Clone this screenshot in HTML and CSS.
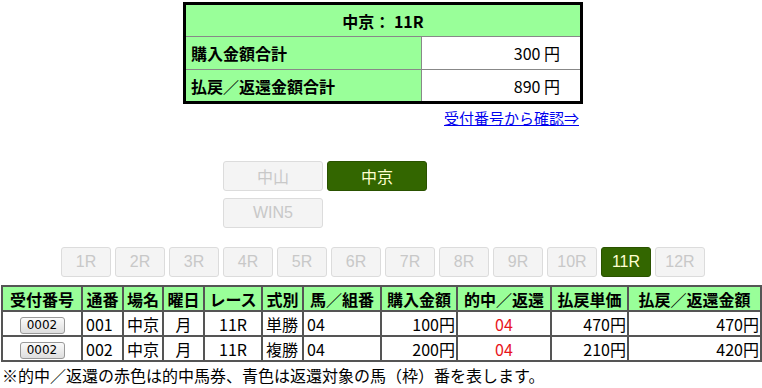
FILE: index.html
```html
<!DOCTYPE html>
<html lang="ja">
<head>
<meta charset="utf-8">
<link rel="stylesheet" href="styles.css">
</head>
<body>
<div class="summary">
  <table class="sum-table">
    <tr><th colspan="2" class="sum-head">中京： 11R</th></tr>
    <tr><th class="sum-label">購入金額合計</th><td class="sum-val">300 円</td></tr>
    <tr><th class="sum-label">払戻／返還金額合計</th><td class="sum-val">890 円</td></tr>
  </table>
  <div class="link-row"><a href="#" class="confirm-link">受付番号から確認⇒</a></div>
</div>

<div class="venues">
  <span class="btn">中山</span>
  <span class="btn active">中京</span>
  <span class="btn win5">WIN5</span>
</div>

<div class="races">
  <span class="btn race">1R</span>
  <span class="btn race">2R</span>
  <span class="btn race">3R</span>
  <span class="btn race">4R</span>
  <span class="btn race">5R</span>
  <span class="btn race">6R</span>
  <span class="btn race">7R</span>
  <span class="btn race">8R</span>
  <span class="btn race">9R</span>
  <span class="btn race">10R</span>
  <span class="btn race active">11R</span>
  <span class="btn race">12R</span>
</div>

<table class="detail">
  <colgroup>
    <col class="c1"><col class="c2"><col class="c3"><col class="c4"><col class="c5"><col class="c6">
    <col class="c7"><col class="c8"><col class="c9"><col class="c10"><col class="c11">
  </colgroup>
  <tr>
    <th>受付番号</th><th>通番</th><th>場名</th><th>曜日</th><th>レース</th><th>式別</th>
    <th>馬／組番</th><th>購入金額</th><th>的中／返還</th><th>払戻単価</th><th>払戻／返還金額</th>
  </tr>
  <tr>
    <td class="center"><span class="rbtn">0002</span></td><td>001</td><td>中京</td><td class="center">月</td>
    <td class="center">11R</td><td>単勝</td><td>04</td><td class="right">100円</td>
    <td class="center hit">04</td><td class="right">470円</td><td class="right">470円</td>
  </tr>
  <tr>
    <td class="center"><span class="rbtn">0002</span></td><td>002</td><td>中京</td><td class="center">月</td>
    <td class="center">11R</td><td>複勝</td><td>04</td><td class="right">200円</td>
    <td class="center hit">04</td><td class="right">210円</td><td class="right">420円</td>
  </tr>
</table>
<p class="note">※的中／返還の赤色は的中馬券、青色は返還対象の馬（枠）番を表します。</p>
</body>
</html>
```

FILE: styles.css
```css
html, body {
  margin: 0;
  padding: 0;
  background: #fff;
}
body {
  font-family: "Noto Sans CJK JP", "DejaVu Sans", sans-serif;
  color: #000;
}
.summary {
  width: 400px;
  margin: 2px 0 0 183px;
}
.sum-table {
  width: 400px;
  border-collapse: collapse;
  border: 3px solid #000;
  font-size: 16px;
  line-height: 20px;
}
.sum-table th, .sum-table td {
  border: 1px solid #888;
  height: 33px;
  padding: 0 5px;
  box-sizing: border-box;
}
.sum-head {
  background: #99ff99;
  text-align: center;
  font-weight: bold;
}
.sum-label {
  background: #99ff99;
  text-align: left;
  font-weight: bold;
  width: 237px;
}
.sum-val {
  background: #fff;
  text-align: right;
  padding-right: 20px !important;
}
.link-row {
  text-align: right;
  padding-right: 4px;
  margin-top: 3px;
  line-height: 20px;
}
.confirm-link {
  color: #0000ee;
  font-size: 15px;
  text-decoration: underline;
}
.venues {
  width: 316px;
  margin: 33px auto 0;
  display: grid;
  grid-template-columns: repeat(3, 100px);
  column-gap: 4px;
  row-gap: 7px;
}
.win5 {
  grid-column: 1;
}
.btn {
  display: flex;
  align-items: center;
  justify-content: center;
  height: 30px;
  box-sizing: border-box;
  border: 1px solid #dcdcdc;
  border-radius: 3px;
  background: #f4f4f4;
  color: #c8c8c8;
  font-family: "Liberation Sans", "Noto Sans CJK JP", sans-serif;
  font-size: 16px;
}
.btn.active {
  background: #336600;
  border-color: #2a5200;
  color: #ffffd0;
}
.races {
  display: flex;
  justify-content: center;
  gap: 4px;
  margin: 19px 0 0 4px;
}
.race {
  width: 50px;
  height: 30px;
}
.detail {
  margin: 8px 0 0 1px;
  width: 759px;
  border-collapse: collapse;
  border: 2px solid #444;
  table-layout: fixed;
  font-size: 16px;
  line-height: 20px;
}
.detail th, .detail td {
  border: 2px solid #555;
  padding: 0 3px;
  height: 25px;
  box-sizing: border-box;
  white-space: nowrap;
  overflow: hidden;
}
.detail th {
  background: #99ff99;
  font-weight: bold;
  text-align: center;
}
.detail td { text-align: left; }
.detail td.center { text-align: center; }
.detail td.right { text-align: right; padding-right: 1px; }
.detail td.hit { color: #e8141c; }
.c1 { width: 80px; }
.c2 { width: 41px; }
.c3 { width: 40px; }
.c4 { width: 41px; }
.c5 { width: 58px; }
.c6 { width: 41px; }
.c7 { width: 78px; }
.c8 { width: 76px; }
.c9 { width: 94px; }
.c10 { width: 77px; }
.c11 { width: 133px; }
.rbtn {
  display: inline-block;
  width: 45px;
  height: 17px;
  line-height: 15px;
  box-sizing: border-box;
  border: 1px solid #999;
  border-radius: 3px;
  background: linear-gradient(#fafafa, #dedede);
  font-size: 12px;
  font-family: "DejaVu Sans", sans-serif;
  vertical-align: middle;
  color: #000;
}
.note {
  margin: 3px 0 0 2px;
  font-size: 16px;
  line-height: 20px;
}
```
